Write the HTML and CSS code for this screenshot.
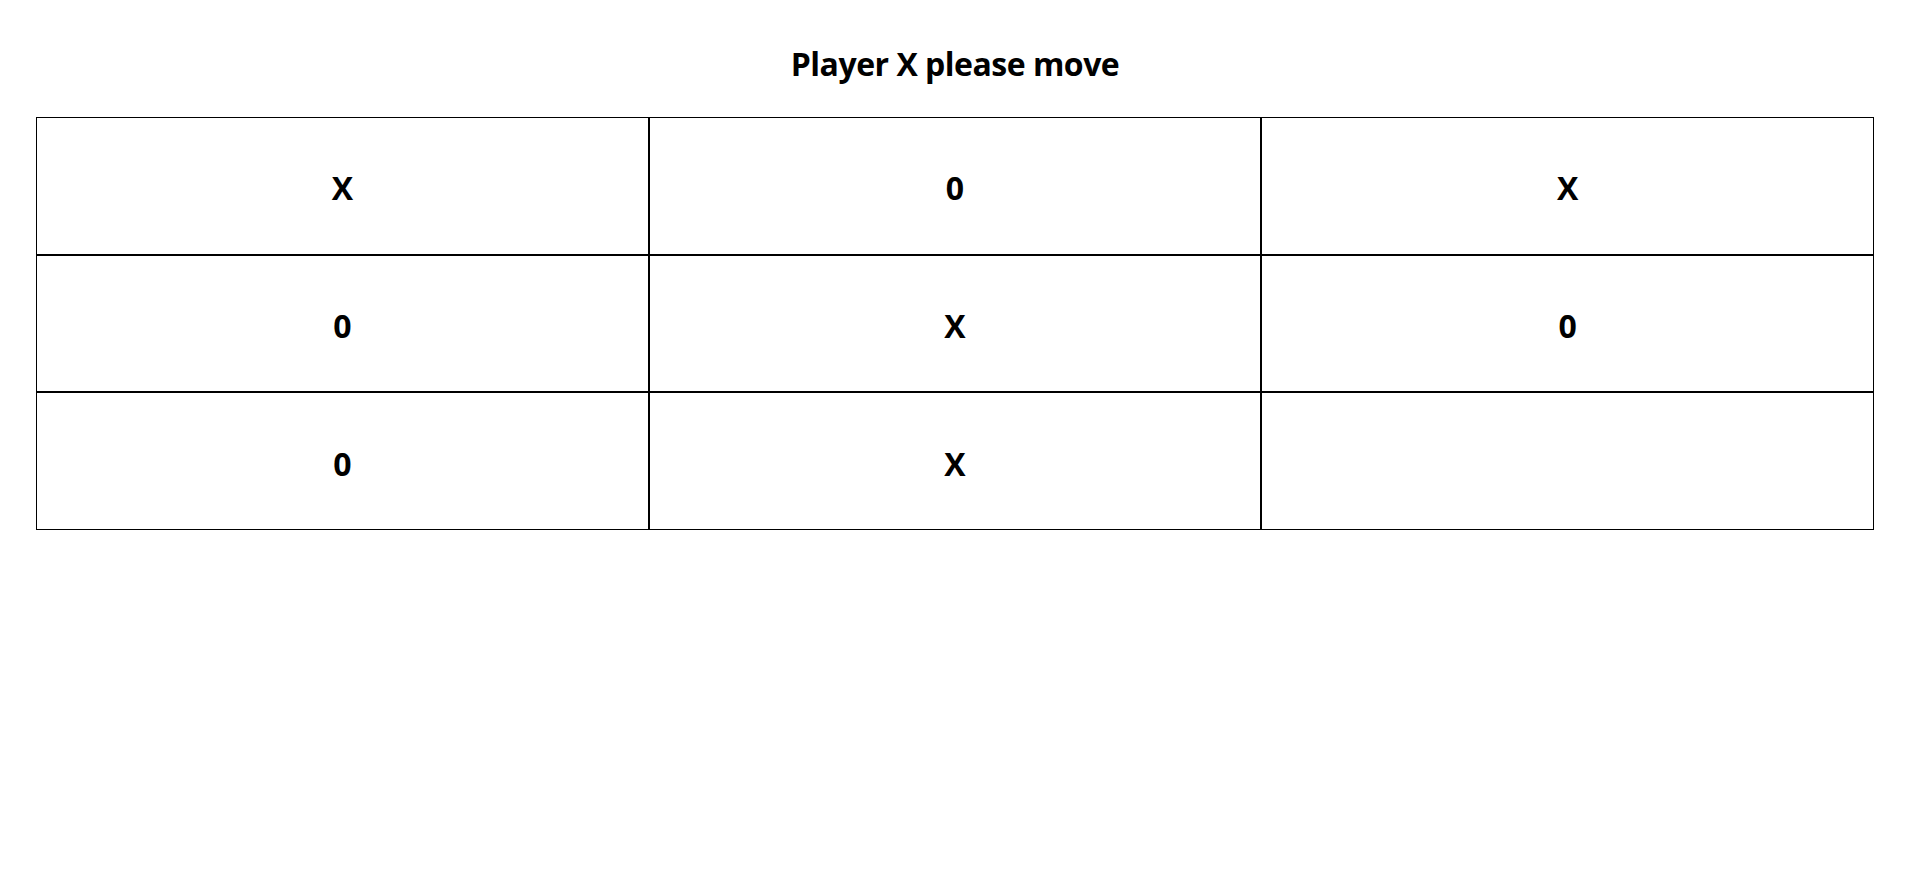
FILE: index.html
```html
<!DOCTYPE html>
<html lang="en">
<head>
<meta charset="utf-8">
<title>Tic Tac Toe</title>
<link rel="stylesheet" href="styles.css">
</head>
<body>
<div class="game">
  <h1 class="status">Player X please move</h1>
  <table class="board">
    <tr><td class="cell">X</td><td class="cell">0</td><td class="cell">X</td></tr>
    <tr><td class="cell">0</td><td class="cell">X</td><td class="cell">0</td></tr>
    <tr><td class="cell">0</td><td class="cell">X</td><td class="cell"></td></tr>
  </table>
</div>
</body>
</html>
```
FILE: styles.css
```css
html, body {
  margin: 0;
  padding: 0;
  background: #fff;
}
body {
  font-family: "Open Sans", "Noto Sans", sans-serif;
  color: #000;
}
.game {
  padding: 42px 41px 0 36px;
}
.status {
  margin: 0 0 31px 0;
  font-size: 32px;
  line-height: 44px;
  font-weight: 700;
  letter-spacing: -0.5px;
  text-align: center;
}
.board {
  width: 1838px;
  height: 413px;
  border-collapse: separate;
  border-spacing: 0;
  table-layout: fixed;
}
.cell {
  border: 1px solid #000;
  text-align: center;
  vertical-align: middle;
  font-size: 32px;
  font-weight: 700;
  padding: 4px 0 0 0;
}
```
